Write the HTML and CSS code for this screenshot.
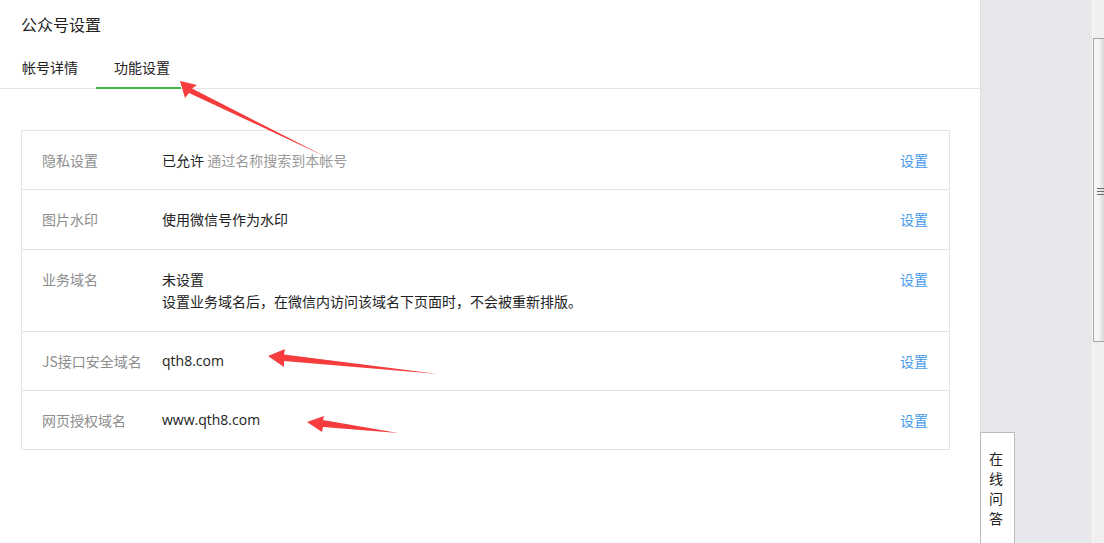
FILE: index.html
```html
<!DOCTYPE html>
<html>
<head>
  <meta charset="utf-8">
  <title>公众号设置</title>
  <link rel="stylesheet" href="styles.css">
</head>
<body>

  <div class="page">
    <div class="main">
      <div class="header">
        <h1>公众号设置</h1>
      </div>
      <div class="tabs">
        <a href="#" class="tab">帐号详情</a>
        <a href="#" class="tab active">功能设置</a>
      </div>

      <div class="content">
        <div class="settings">
          <div class="row">
            <div class="label">隐私设置</div>
            <div class="value">已允许 <span class="hint">通过名称搜索到本帐号</span></div>
            <a href="#" class="action">设置</a>
          </div>
          <div class="row roomy">
            <div class="label">图片水印</div>
            <div class="value">使用微信号作为水印</div>
            <a href="#" class="action">设置</a>
          </div>
          <div class="row roomy">
            <div class="label">业务域名</div>
            <div class="value">未设置<br>设置业务域名后，在微信内访问该域名下页面时，不会被重新排版。</div>
            <a href="#" class="action">设置</a>
          </div>
          <div class="row">
            <div class="label">JS接口安全域名</div>
            <div class="value domain">qth8.com</div>
            <a href="#" class="action">设置</a>
          </div>
          <div class="row">
            <div class="label">网页授权域名</div>
            <div class="value domain">www.qth8.com</div>
            <a href="#" class="action">设置</a>
          </div>
        </div>
      </div>
    </div>

    <div class="side"></div>

    <div class="scrollbar">
      <div class="thumb">
        <div class="grip"></div>
      </div>
    </div>
  </div>

  <div class="ask">在线问答</div>

  <svg class="arrows" width="1104" height="543" viewBox="0 0 1104 543">
    <polygon points="180,81 197,85 192,88.5 326,157 189,93 185,98" />
    <polygon points="268,356 285,349 284,354.5 438,374 284,361 284,367" />
    <polygon points="307,422 324,416 323,420 398,433 323,427 322,432" />
  </svg>

</body>
</html>
```

FILE: styles.css
```css
body {
  margin: 0;
  padding: 0;
  font-family: "Noto Sans CJK SC", "Liberation Sans", sans-serif;
  font-size: 14px;
  color: #222;
  background-color: #fff;
  overflow: hidden;
}

.page {
  display: flex;
  height: 543px;
}

.main {
  width: 980px;
  flex-shrink: 0;
  background-color: #fff;
}

.header {
  padding: 13px 21px 0;
}

.header h1 {
  margin: 0;
  font-size: 16px;
  font-weight: normal;
  line-height: 22px;
  color: #222;
}

.tabs {
  display: flex;
  margin-top: 12px;
  padding-left: 22px;
  border-bottom: 1px solid #e4e4e4;
}

.tab {
  display: block;
  line-height: 40px;
  color: #222;
  text-decoration: none;
  border-bottom: 2px solid transparent;
  margin-bottom: -1px;
}

.tab.active {
  margin-left: 18px;
  padding: 0 11px 0 18px;
  border-bottom-color: #44b549;
}

.content {
  padding: 41px 30px 0 21px;
}

.settings {
  border: 1px solid #e4e4e4;
}

.row {
  display: flex;
  align-items: flex-start;
  padding: 18px 21px 18px 20px;
  line-height: 22px;
  border-top: 1px solid #e4e4e4;
}

.row.roomy {
  padding-bottom: 19px;
}

.row:first-child {
  border-top: none;
}

.label {
  width: 120px;
  flex-shrink: 0;
  color: #8d8d8d;
}

.value {
  flex: 1;
  color: #222;
}

.value.domain {
  font-family: "Open Sans", "Liberation Sans", sans-serif;
  font-size: 14px;
  line-height: 22px;
  height: 22px;
}

.hint {
  color: #9a9a9a;
}

.action {
  color: #459ae9;
  text-decoration: none;
}

.side {
  flex: 1;
  background-color: #e7e8ec;
  border-left: 1px solid #dcdde1;
}

.scrollbar {
  width: 11px;
  background-color: #f0f0f0;
  border-left: 1px solid #f8f8f8;
  padding-top: 38px;
}

.thumb {
  height: 302px;
  border: 1px solid #a6a6a6;
  border-right: none;
  background: linear-gradient(to right, #f6f6f6 0, #f6f6f6 45%, #dadada 100%);
  display: flex;
  align-items: center;
  justify-content: flex-end;
}

.grip {
  width: 7px;
  height: 9px;
  background: repeating-linear-gradient(to bottom, #6b6b6b 0, #6b6b6b 1px, transparent 1px, transparent 3px);
  margin-top: 4px;
}

.ask {
  position: absolute;
  left: 980px;
  top: 432px;
  width: 14px;
  height: 111px;
  padding: 15px 11px 0 8px;
  box-sizing: content-box;
  background-color: #fff;
  border: 1px solid #bbb;
  border-bottom: none;
  font-size: 14px;
  line-height: 20px;
  color: #222;
}

.arrows {
  position: absolute;
  left: 0;
  top: 0;
  pointer-events: none;
}

.arrows polygon {
  fill: #f63c3c;
}
```
